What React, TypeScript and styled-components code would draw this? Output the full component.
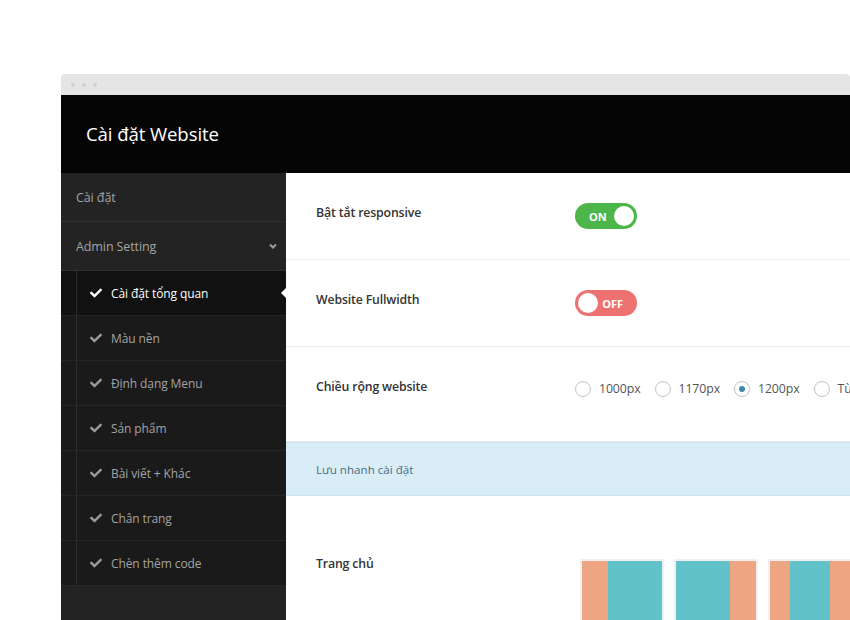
import React from "react";
import styled, { createGlobalStyle } from "styled-components";
import { FaCheck } from "react-icons/fa";

const Global = createGlobalStyle`
  html, body { margin: 0; padding: 0; background: #fff; }
  body { font-family: "Open Sans", "Noto Sans", sans-serif; }
  * { box-sizing: border-box; }
`;

const Page = styled.div`
  padding: 74px 0 0 61px;
  height: 620px;
  overflow: hidden;
`;

const Window = styled.div`
  width: 789px;
  height: 546px;
  border-radius: 4px 4px 0 0;
  overflow: hidden;
  display: flex;
  flex-direction: column;
`;

const TopBar = styled.div`
  height: 21px;
  background: #e5e5e5;
  display: flex;
  align-items: center;
  gap: 7px;
  padding-left: 10px;
  flex-shrink: 0;
`;

const Dot = styled.span`
  width: 4px;
  height: 4px;
  border-radius: 50%;
  background: #cdd3cf;
`;

const Header = styled.div`
  height: 78px;
  background: #050505;
  color: #fff;
  display: flex;
  align-items: center;
  padding-left: 25px;
  padding-bottom: 2px;
  font-size: 18.6px;
  letter-spacing: -0.1px;
  flex-shrink: 0;
`;

const Body = styled.div`
  flex: 1;
  display: flex;
  min-height: 0;
`;

const Sidebar = styled.div`
  width: 225px;
  flex-shrink: 0;
  background: #232323;
  font-size: 12px;
  letter-spacing: -0.1px;
`;

const MenuItem = styled.div`
  height: 49px;
  display: flex;
  align-items: center;
  justify-content: space-between;
  padding: 0 8px 0 15px;
  color: #a3a3a3;
  font-size: 12.5px;
  border-bottom: 1px solid #2f2f2f;
`;

const SubMenu = styled.div`
  background: #1a1a1a;
  position: relative;
  &::before {
    content: "";
    position: absolute;
    left: 15px;
    top: 0;
    bottom: 0;
    width: 1px;
    background: #2c2c2c;
    z-index: 1;
  }
`;

const SubItem = styled.div<{ $active?: boolean }>`
  height: 45px;
  display: flex;
  align-items: center;
  padding-left: 29px;
  gap: 9px;
  position: relative;
  color: ${(p) => (p.$active ? "#fff" : "#a3a3a3")};
  background: ${(p) => (p.$active ? "#111" : "transparent")};
  border-bottom: 1px solid #262626;
  svg { color: ${(p) => (p.$active ? "#fff" : "#9a9a9a")}; }
  ${(p) =>
    p.$active &&
    `&::after {
      content: "";
      position: absolute;
      right: 0;
      top: 50%;
      margin-top: -5px;
      border-style: solid;
      border-width: 5px 5px 5px 0;
      border-color: transparent #fff transparent transparent;
    }`}
`;

const Main = styled.div`
  flex: 1;
  background: #fff;
  min-width: 0;
`;

const Row = styled.div<{ $h: number; $pt?: number }>`
  height: ${(p) => p.$h}px;
  display: flex;
  align-items: flex-start;
  padding: ${(p) => p.$pt ?? 30}px 0 0 30px;
  border-bottom: 1px solid #ebebeb;
`;

const Label = styled.div`
  width: 259px;
  flex-shrink: 0;
  font-size: 12.3px;
  font-weight: 600;
  letter-spacing: -0.15px;
  color: #333;
  line-height: 20px;
`;

const Toggle = styled.div<{ $on: boolean }>`
  width: 62px;
  height: 26px;
  border-radius: 13px;
  background: ${(p) => (p.$on ? "#4cb64a" : "#ee7171")};
  display: flex;
  align-items: center;
  flex-direction: ${(p) => (p.$on ? "row" : "row-reverse")};
  justify-content: space-between;
  padding-left: ${(p) => (p.$on ? "14px" : "3px")};
  padding-right: ${(p) => (p.$on ? "3px" : "14px")};
  color: #fff;
  font-size: 11px;
  font-weight: 700;
`;

const Knob = styled.span`
  width: 20px;
  height: 20px;
  border-radius: 50%;
  background: #fff;
`;

const Radios = styled.div`
  display: flex;
  align-items: center;
  gap: 14px;
  margin-top: 2px;
  white-space: nowrap;
`;

const RadioItem = styled.label`
  display: flex;
  align-items: center;
  gap: 8px;
  font-size: 12.3px;
  letter-spacing: -0.1px;
  color: #555;
  line-height: 20px;
`;

const RadioCircle = styled.span<{ $checked?: boolean }>`
  width: 16px;
  height: 16px;
  border-radius: 50%;
  border: 1px solid #c4c4c4;
  display: flex;
  align-items: center;
  justify-content: center;
  &::after {
    content: "";
    width: 6px;
    height: 6px;
    border-radius: 50%;
    background: ${(p) => (p.$checked ? "#3d88ad" : "transparent")};
  }
`;

const Info = styled.div`
  height: 54px;
  background: #d9edf7;
  border-top: 1px solid #c9e5ef;
  border-bottom: 1px solid #c9e5ef;
  display: flex;
  align-items: center;
  padding-left: 30px;
  font-size: 11.6px;
  color: #4a6e84;
`;

const HomeRow = styled.div`
  display: flex;
  align-items: flex-start;
  padding: 58px 0 0 30px;
`;

const Thumbs = styled.div`
  display: flex;
  gap: 10px;
  margin-top: 5px;
  margin-left: 5px;
`;

const Thumb = styled.div`
  width: 84px;
  height: 70px;
  border: 2px solid #f0f0f0;
  display: flex;
`;

const Block = styled.div<{ $w: number; $c: string }>`
  width: ${(p) => p.$w}px;
  flex-shrink: 0;
  background: ${(p) => p.$c};
`;

const O = "#eea583";
const T = "#62c2c9";

const subs = [
  "Cài đặt tổng quan",
  "Màu nền",
  "Định dạng Menu",
  "Sản phẩm",
  "Bài viết + Khác",
  "Chân trang",
  "Chèn thêm code",
];

const Chevron = () => (
  <svg width="10" height="10" viewBox="0 0 10 10">
    <path d="M2 3.5 L5 6.5 L8 3.5" stroke="#9a9a9a" strokeWidth="2" fill="none" />
  </svg>
);

export default function App() {
  return (
    <>
      <Global />
      <Page>
        <Window>
          <TopBar>
            <Dot />
            <Dot />
            <Dot />
          </TopBar>
          <Header>Cài đặt Website</Header>
          <Body>
            <Sidebar>
              <MenuItem>Cài đặt</MenuItem>
              <MenuItem>
                Admin Setting
                <Chevron />
              </MenuItem>
              <SubMenu>
                {subs.map((s, i) => (
                  <SubItem key={s} $active={i === 0}>
                    <FaCheck size={12} />
                    {s}
                  </SubItem>
                ))}
              </SubMenu>
            </Sidebar>
            <Main>
              <Row $h={87}>
                <Label>Bật tắt responsive</Label>
                <Toggle $on>
                  ON
                  <Knob />
                </Toggle>
              </Row>
              <Row $h={87}>
                <Label>Website Fullwidth</Label>
                <Toggle $on={false}>
                  OFF
                  <Knob />
                </Toggle>
              </Row>
              <Row $h={95} $pt={30}>
                <Label>Chiều rộng website</Label>
                <Radios>
                  <RadioItem>
                    <RadioCircle />
                    1000px
                  </RadioItem>
                  <RadioItem>
                    <RadioCircle />
                    1170px
                  </RadioItem>
                  <RadioItem>
                    <RadioCircle $checked />
                    1200px
                  </RadioItem>
                  <RadioItem>
                    <RadioCircle />
                    Tùy chỉnh
                  </RadioItem>
                </Radios>
              </Row>
              <Info>Lưu nhanh cài đặt</Info>
              <HomeRow>
                <Label>Trang chủ</Label>
                <Thumbs>
                  <Thumb>
                    <Block $w={26} $c={O} />
                    <Block $w={54} $c={T} />
                  </Thumb>
                  <Thumb>
                    <Block $w={54} $c={T} />
                    <Block $w={26} $c={O} />
                  </Thumb>
                  <Thumb>
                    <Block $w={20} $c={O} />
                    <Block $w={40} $c={T} />
                    <Block $w={20} $c={O} />
                  </Thumb>
                </Thumbs>
              </HomeRow>
            </Main>
          </Body>
        </Window>
      </Page>
    </>
  );
}
